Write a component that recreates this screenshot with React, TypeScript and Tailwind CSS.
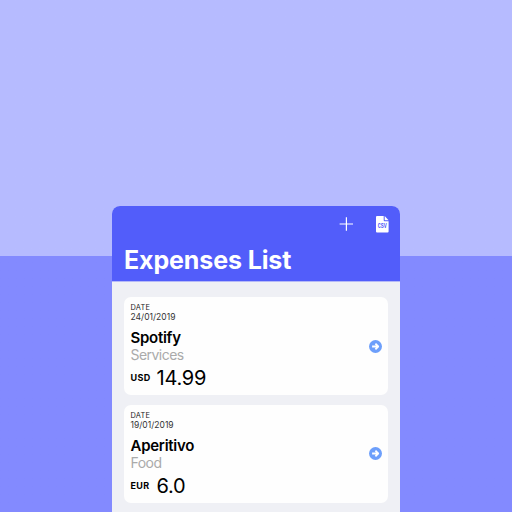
type Expense = { date: string; name: string; category: string; currency: string; amount: string };

const expenses: Expense[] = [
  { date: "24/01/2019", name: "Spotify", category: "Services", currency: "USD", amount: "14.99" },
  { date: "19/01/2019", name: "Aperitivo", category: "Food", currency: "EUR", amount: "6.0" },
];

function PlusIcon() {
  return (
    <svg width="14" height="14" viewBox="0 0 14 14" fill="none" stroke="white" strokeWidth="1.2">
      <path d="M7.4 0.2V13.8M0.6 7H14" />
    </svg>
  );
}

function CsvIcon() {
  return (
    <svg width="13" height="17" viewBox="0 0 13 17">
      <path d="M1 0H7.7V4.2Q7.7 5.2 8.7 5.2H12.6V15.4Q12.6 16.4 11.6 16.4H1Q0 16.4 0 15.4V1Q0 0 1 0Z" fill="white" />
      <path d="M8.7 0.1L12.6 4.2H8.7Z" fill="white" />
      <text x="6.3" y="12.4" textAnchor="middle" textLength="9" lengthAdjust="spacingAndGlyphs" fill="#525dfa" className="font-['Liberation_Mono',monospace] text-[6.5px] font-bold">
        CSV
      </text>
    </svg>
  );
}

function ArrowIcon() {
  return (
    <svg width="13" height="13" viewBox="0 0 13 13" fill="none">
      <circle cx="6.5" cy="6.5" r="6.5" fill="#6d9ffb" />
      <path d="M3.1 6.5H8.8M6.4 3.7L9.2 6.5L6.4 9.3" stroke="white" strokeWidth="1.8" strokeLinejoin="round" />
    </svg>
  );
}

function ExpenseCard({ expense }: { expense: Expense }) {
  return (
    <article className="flex h-[98px] items-center justify-between rounded-[7px] bg-[#fefefe] pl-[6.5px] pr-[6px]">
      <div className="flex h-full flex-col pt-[6px]">
        <span className="text-[7.4px] leading-[10px] tracking-[0.2px] text-[#222]">DATE</span>
        <span className="-mt-px text-[8.5px] leading-[10px] tracking-[0.02px] text-[#333]">{expense.date}</span>
        <span className="mt-[7px] text-[15px] font-semibold leading-[18px] tracking-[-0.27px] text-black">{expense.name}</span>
        <span className="-mt-px text-[14px] leading-[18px] tracking-[-0.54px] text-[#aaa]">{expense.category}</span>
        <div className="mt-[2px] flex items-center leading-[24px] text-black">
          <span className="w-[26px] text-[9px] font-bold tracking-[0.35px]">{expense.currency}</span>
          <span className="text-[20px] tracking-[-0.25px]">{expense.amount}</span>
        </div>
      </div>
      <ArrowIcon />
    </article>
  );
}

export default function App() {
  return (
    <div className="flex h-screen w-full justify-center overflow-hidden bg-linear-to-b from-[#b6bbff] from-50% to-[#838aff] to-50% pt-[206px] font-['Inter',sans-serif]">
      <main className="h-[306px] w-[288px] overflow-hidden rounded-t-[8px] bg-[#eff0f5]">
        <header className="h-[76px] border-b border-[#b5b9f8] bg-[#525dfa] pl-3 pr-[11px] pt-[10px]">
          <div className="flex h-[17px] items-start justify-end gap-[23px]">
            <div className="pt-px">
              <PlusIcon />
            </div>
            <CsvIcon />
          </div>
          <h1 className="mt-[11px] text-[25px] font-bold leading-[32px] tracking-[-0.12px] text-white">Expenses List</h1>
        </header>
        <section className="flex flex-col gap-[9.5px] px-3 pt-[15px]">
          {expenses.map((expense) => (
            <ExpenseCard key={expense.name} expense={expense} />
          ))}
        </section>
      </main>
    </div>
  );
}
